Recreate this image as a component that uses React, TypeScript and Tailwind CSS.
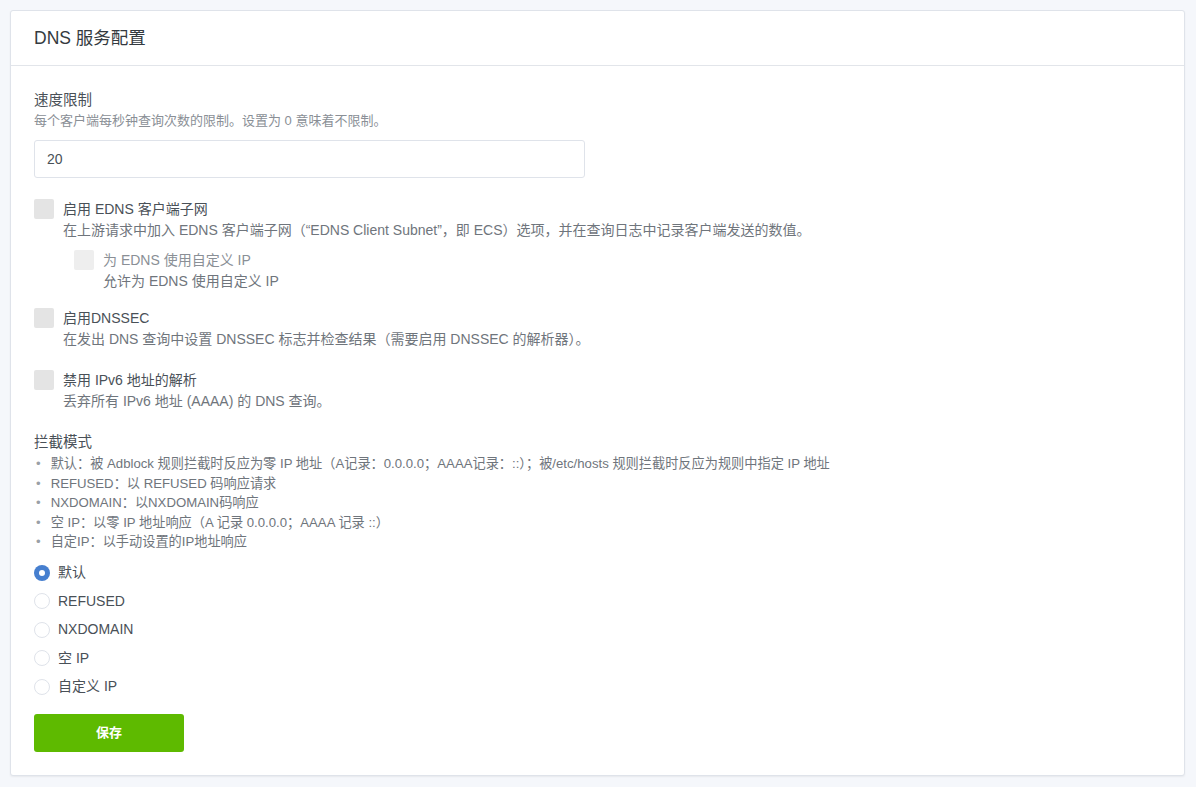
import { useState } from "react";

const font = {
  fontFamily: '"Helvetica Neue", "Liberation Sans", "Noto Sans CJK SC", sans-serif',
};

type CheckProps = {
  label: string;
  desc: string;
  disabled?: boolean;
  className?: string;
};

function CheckRow({ label, desc, disabled, className = "" }: CheckProps) {
  return (
    <div className={`flex ${className}`}>
      <span
        className={`h-5 w-5 shrink-0 rounded-[2px] ${
          disabled ? "bg-[#eeeeee]" : "bg-[#e4e4e4]"
        }`}
      />
      <div className="ml-[9px]">
        <div className={`text-[14px] leading-[20px] ${disabled ? "text-[#8a8f96]" : "text-[#495057]"}`}>
          {label}
        </div>
        <div className="text-[14px] leading-[22px] text-[#6f757c]">{desc}</div>
      </div>
    </div>
  );
}

const modes = [
  { id: "default", label: "默认" },
  { id: "refused", label: "REFUSED" },
  { id: "nxdomain", label: "NXDOMAIN" },
  { id: "null_ip", label: "空 IP" },
  { id: "custom_ip", label: "自定义 IP" },
];

const modeNotes = [
  "默认：被 Adblock 规则拦截时反应为零 IP 地址（A记录：0.0.0.0；AAAA记录：::）；被/etc/hosts 规则拦截时反应为规则中指定 IP 地址",
  "REFUSED：以 REFUSED 码响应请求",
  "NXDOMAIN：以NXDOMAIN码响应",
  "空 IP：以零 IP 地址响应（A 记录 0.0.0.0；AAAA 记录 ::）",
  "自定IP：以手动设置的IP地址响应",
];

export default function App() {
  const [mode, setMode] = useState("default");

  return (
    <div className="min-h-screen bg-[#f5f7fb] pt-[10px] pl-[10px] pr-[11px] pb-3" style={font}>
      <div className="rounded-[3px] border border-[#dfe3ea] bg-white shadow-[0_1px_2px_rgba(0,0,0,0.06)]">
        <div className="flex h-[55px] items-center border-b border-[#e2e5ea] px-[23px]">
          <h1 className="text-[17.5px] font-normal text-[#343a40]">DNS 服务配置</h1>
        </div>

        <div className="px-[23px] pt-[24px] pb-[23px]">
          <div className="text-[14.5px] leading-[20px] text-[#495057]">速度限制</div>
          <div className="mt-[1px] text-[13px] leading-[20px] text-[#8a8f96]">
            每个客户端每秒钟查询次数的限制。设置为 0 意味着不限制。
          </div>
          <input
            defaultValue="20"
            className="mt-[9px] h-[38px] w-[551px] rounded-[3px] border border-[#dfe3ea] px-3 text-[14px] text-[#495057] outline-none"
          />

          <CheckRow
            className="mt-[21px]"
            label="启用 EDNS 客户端子网"
            desc="在上游请求中加入 EDNS 客户端子网（“EDNS Client Subnet”，即 ECS）选项，并在查询日志中记录客户端发送的数值。"
          />
          <CheckRow
            className="mt-[9px] ml-10"
            disabled
            label="为 EDNS 使用自定义 IP"
            desc="允许为 EDNS 使用自定义 IP"
          />
          <CheckRow
            className="mt-[16px]"
            label="启用DNSSEC"
            desc="在发出 DNS 查询中设置 DNSSEC 标志并检查结果（需要启用 DNSSEC 的解析器）。"
          />
          <CheckRow
            className="mt-[20px]"
            label="禁用 IPv6 地址的解析"
            desc="丢弃所有 IPv6 地址 (AAAA) 的 DNS 查询。"
          />

          <div className="mt-[20px] text-[14.5px] leading-[20px] text-[#495057]">拦截模式</div>
          <ul className="mt-[2px]">
            {modeNotes.map((n) => (
              <li key={n} className="flex text-[13.2px] leading-[19.5px] text-[#6f757c]">
                <span className="mr-[10px] ml-[2px] text-[#9aa0a6]">•</span>
                {n}
              </li>
            ))}
          </ul>

          <div className="mt-[7px]">
            {modes.map((m) => {
              const on = mode === m.id;
              return (
                <label
                  key={m.id}
                  className="flex h-[28.5px] cursor-pointer items-center"
                  onClick={() => setMode(m.id)}
                >
                  <span
                    className={`flex h-4 w-4 shrink-0 items-center justify-center rounded-full ${
                      on ? "bg-[#467fcf]" : "border border-[#dfe3ea] bg-white"
                    }`}
                  >
                    {on && <span className="h-[6px] w-[6px] rounded-full bg-white" />}
                  </span>
                  <span className="ml-2 text-[14px] text-[#495057]">{m.label}</span>
                </label>
              );
            })}
          </div>

          <button className="mt-[13px] h-[38px] w-[150px] rounded-[3px] bg-[#5eba00] text-[13px] font-semibold text-white">
            保存
          </button>
        </div>
      </div>
    </div>
  );
}
